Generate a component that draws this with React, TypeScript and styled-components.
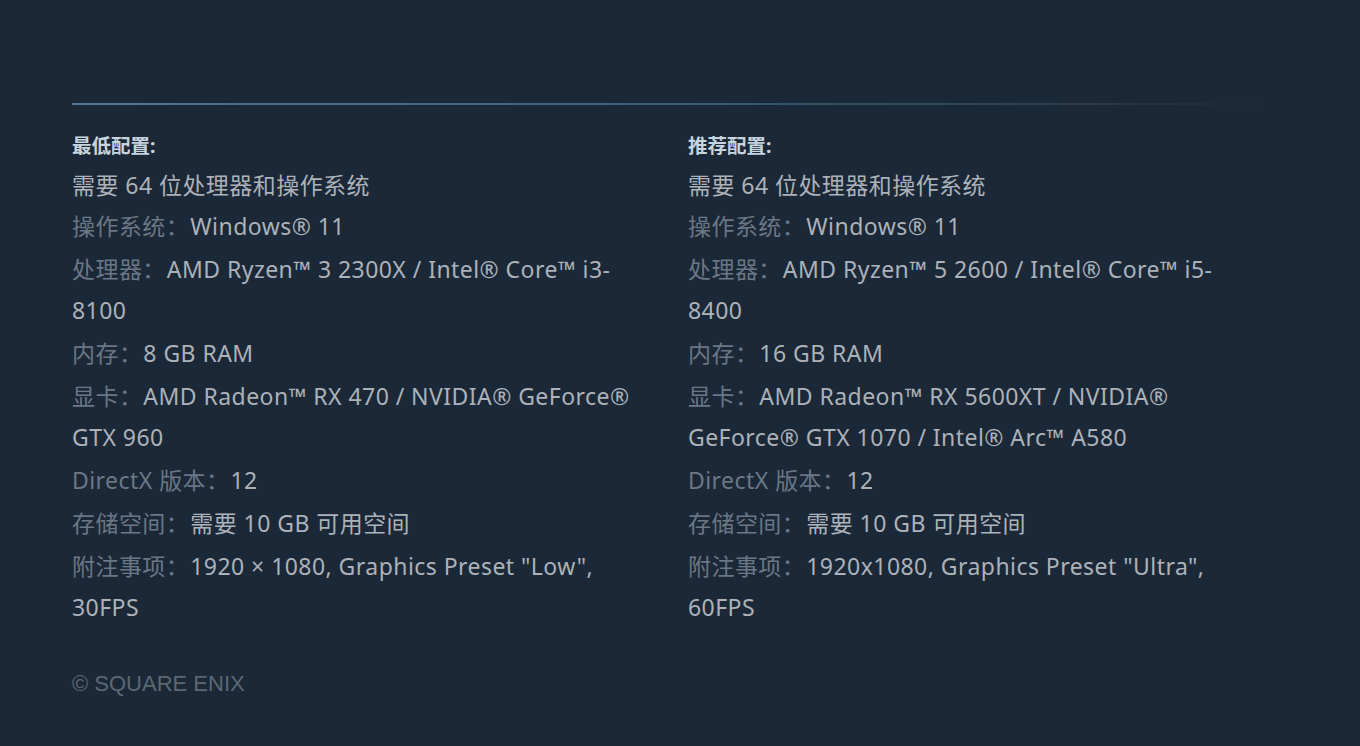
import styled, { createGlobalStyle } from 'styled-components';

const GlobalStyle = createGlobalStyle`
  html, body {
    margin: 0;
    padding: 0;
    background: #1b2838;
  }
  body {
    font-family: "Noto Sans", "Noto Sans CJK SC", sans-serif;
  }
`;

type Req = { label: string; value: string };

const minimum: Req[] = [
  { label: '操作系统：', value: 'Windows® 11' },
  { label: '处理器：', value: 'AMD Ryzen™ 3 2300X / Intel® Core™ i3-8100' },
  { label: '内存：', value: '8 GB RAM' },
  { label: '显卡：', value: 'AMD Radeon™ RX 470 / NVIDIA® GeForce® GTX 960' },
  { label: 'DirectX 版本：', value: '12' },
  { label: '存储空间：', value: '需要 10 GB 可用空间' },
  { label: '附注事项：', value: '1920 × 1080, Graphics Preset "Low", 30FPS' },
];

const recommended: Req[] = [
  { label: '操作系统：', value: 'Windows® 11' },
  { label: '处理器：', value: 'AMD Ryzen™ 5 2600 / Intel® Core™ i5-8400' },
  { label: '内存：', value: '16 GB RAM' },
  { label: '显卡：', value: 'AMD Radeon™ RX 5600XT / NVIDIA® GeForce® GTX 1070 / Intel® Arc™ A580' },
  { label: 'DirectX 版本：', value: '12' },
  { label: '存储空间：', value: '需要 10 GB 可用空间' },
  { label: '附注事项：', value: '1920x1080, Graphics Preset "Ultra", 60FPS' },
];

const Page = styled.div`
  box-sizing: border-box;
  width: 100%;
  min-height: 746px;
  padding: 0 100px 0 72px;
  background: #1b2838;
`;

const Header = styled.div`
  position: relative;
  height: 103px;
  width: 1188px;

  &::after {
    content: '';
    position: absolute;
    left: 0;
    right: 0;
    bottom: -2px;
    height: 2px;
    background: linear-gradient(to right, #51778f 0%, #40617a 45%, #2b4153 80%, rgba(27, 40, 56, 0) 100%);
  }
`;

const Columns = styled.div`
  display: grid;
  grid-template-columns: 570px 570px;
  column-gap: 46px;
  padding-top: 31px;
`;

const Column = styled.div`
  box-sizing: border-box;
`;

const Title = styled.div`
  font-size: 19.5px;
  line-height: 24px;
  font-weight: 700;
  color: #c6d4df;
  margin-bottom: 7px;
`;

const List = styled.ul`
  list-style: none;
  margin: 0;
  padding: 0;
`;

const Item = styled.li`
  font-size: 23px;
  line-height: 41px;
  letter-spacing: 0.45px;
  color: #acb2b8;
  margin-bottom: 2px;

  &:first-child {
    margin-bottom: 0;
  }
`;

const Label = styled.span`
  color: #6b7784;
  margin-right: 1px;
`;

const Value = styled.span`
  color: #acb2b8;
`;

const Legal = styled.div`
  margin-top: 41px;
  font-family: "Liberation Sans", Arial, sans-serif;
  font-size: 22px;
  line-height: 26px;
  color: #5b6873;
`;

const ReqColumn = ({ title, items }: { title: string; items: Req[] }) => (
  <Column>
    <Title>{title}</Title>
    <List>
      <Item>需要 64 位处理器和操作系统</Item>
      {items.map((it) => (
        <Item key={it.label}>
          <Label>{it.label}</Label>
          <Value>{it.value}</Value>
        </Item>
      ))}
    </List>
  </Column>
);

export default function App() {
  return (
    <Page>
      <GlobalStyle />
      <Header />
      <Columns>
        <ReqColumn title="最低配置:" items={minimum} />
        <ReqColumn title="推荐配置:" items={recommended} />
      </Columns>
      <Legal>© SQUARE ENIX</Legal>
    </Page>
  );
}
